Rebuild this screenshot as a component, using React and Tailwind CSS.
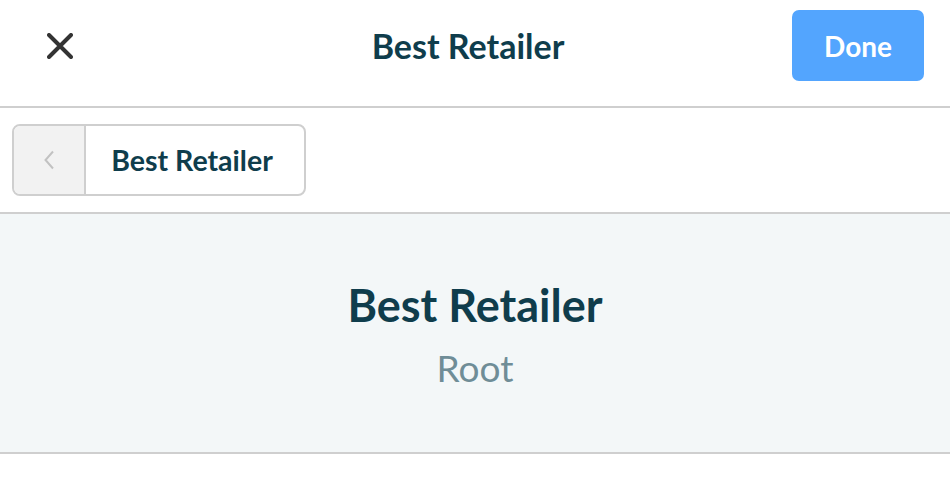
export default function App() {
  const font = { fontFamily: "Lato, 'Open Sans', sans-serif" };
  return (
    <div className="w-[950px] h-[480px] bg-white flex flex-col" style={font}>
      <div className="h-[108px] flex items-start justify-between border-b-2 border-[#cfcfcf] relative">
        <div className="pl-[47px] pt-[33px]">
          <svg width="26" height="26" viewBox="0 0 26 26" className="block">
            <path d="M2 2 L24 24 M24 2 L2 24" stroke="#333" strokeWidth="4" strokeLinecap="round" fill="none" />
          </svg>
        </div>
        <div className="absolute left-0 right-0 top-[26px] pr-[14px] text-center text-[34px] font-bold text-[#0f3d4c] leading-[40px] pointer-events-none">Best Retailer</div>
        <button className="w-[132px] h-[71px] mt-[10px] mr-[26px] rounded-[7px] bg-[#53a5fe] text-white text-[28px] font-bold">Done</button>
      </div>
      <div className="h-[106px] flex items-start pt-[16px] px-[12px] border-b-2 border-[#cfcfcf]">
        <div className="h-[72px] flex border-2 border-[#cfcfcf] rounded-[8px] overflow-hidden">
          <div className="w-[72px] bg-[#f2f2f2] border-r-2 border-[#cfcfcf] flex items-center justify-center">
            <svg width="12" height="20" viewBox="0 0 12 20">
              <path d="M10 1.5 L2.5 10 L10 18.5" stroke="#c2c2c2" strokeWidth="2" fill="none" />
            </svg>
          </div>
          <div className="w-[218px] flex items-center justify-center pr-[6px] text-[28.5px] font-bold text-[#0f3d4c]">Best Retailer</div>
        </div>
      </div>
      <div className="h-[240px] bg-[#f3f7f8] border-b-2 border-[#cfcfcf] flex flex-col items-center pt-[64px]">
        <div className="text-[45px] font-bold text-[#0f3d4c] leading-[54px]">Best Retailer</div>
        <div className="text-[37px] text-[#6f8d97] leading-[44px] mt-[14px]">Root</div>
      </div>
    </div>
  );
}
